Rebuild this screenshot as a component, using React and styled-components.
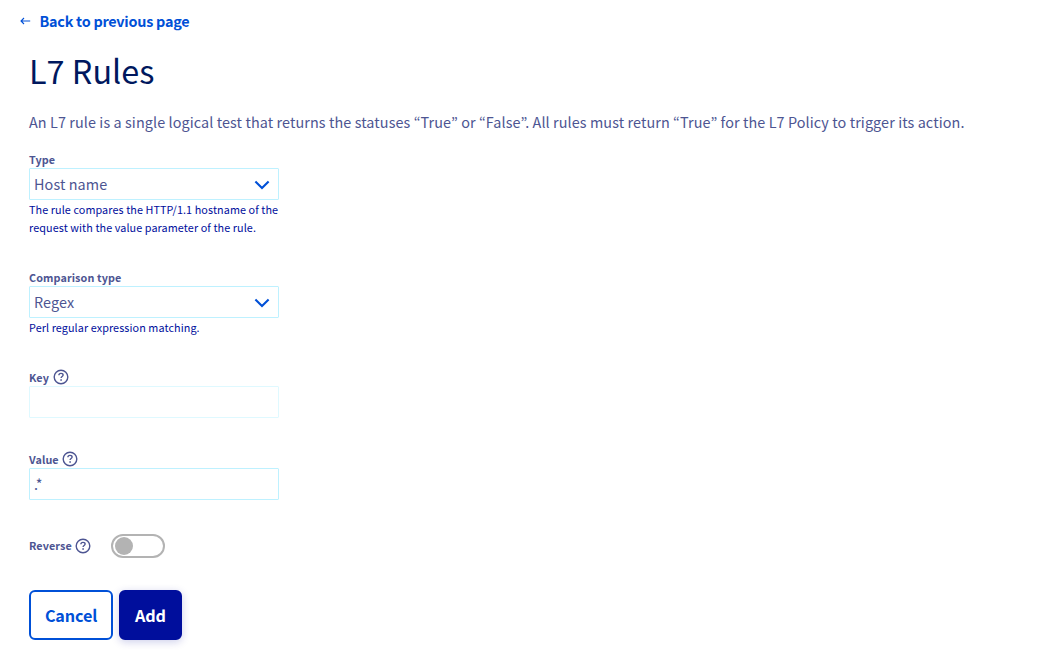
import React from "react";
import styled, { createGlobalStyle } from "styled-components";

const Global = createGlobalStyle`
  * { box-sizing: border-box; }
  body {
    margin: 0;
    background: #fff;
    color: #4d5592;
    font-family: "Source Sans Pro", "Noto Sans CJK KR", "Noto Sans", sans-serif;
    font-size: 14.4px;
    line-height: 24px;
  }
`;

const Page = styled.main`
  height: 666px;
  padding: 9px 29px 0;
  overflow: hidden;
`;

const BackLink = styled.a`
  display: flex;
  align-items: center;
  gap: 8.5px;
  height: 24px;
  margin-left: -9px;
  color: #0050d7;
  font-weight: 700;
  letter-spacing: -0.25px;
  text-decoration: none;
  svg { display: block; }
`;

const Title = styled.h1`
  margin: 15px 0 0;
  height: 44px;
  color: #00185e;
  font-size: 32.4px;
  font-weight: 400;
  line-height: 44px;
`;

const Description = styled.p`
  margin: 18px 0 0;
  height: 24px;
  letter-spacing: 0.088px;
  white-space: nowrap;
`;

const Form = styled.form`
  display: flex;
  flex-direction: column;
  width: 250px;
  padding-top: 17px;
`;

const Field = styled.div`
  height: ${(p) => p.$height}px;
`;

const LabelRow = styled.div`
  display: flex;
  align-items: center;
  gap: 3.6px;
  height: 16px;
  margin-bottom: 1px;
  svg { display: block; flex: none; }
`;

const Label = styled.label`
  font-size: 10.8px;
  font-weight: 700;
  letter-spacing: 0.1px;
  line-height: 16px;
  white-space: nowrap;
`;

const Control = styled.div`
  display: flex;
  align-items: center;
  justify-content: space-between;
  height: 32px;
  padding: 0 8px 0 4px;
  border: 1px solid #bef1ff;
  border-radius: 1px;
  letter-spacing: 0.09px;
  svg { display: block; margin-top: 1px; }
`;

const Input = styled.input`
  display: block;
  width: 250px;
  height: 32px;
  padding: 0 4px 1px;
  border: 1px solid #bef1ff;
  border-radius: 1px;
  background: #fff;
  color: #4d5592;
  font: inherit;
  outline: none;
  &:disabled { border-color: #dff9ff; }
`;

const Hint = styled.p`
  margin: 0;
  color: #000e9c;
  font-size: 10.8px;
  letter-spacing: 0.09px;
  line-height: 18px;
  white-space: nowrap;
`;

const SwitchRow = styled.div`
  display: flex;
  align-items: center;
  gap: 19.4px;
  height: 24px;
  margin-top: 1px;
  ${Label} { margin-bottom: 2px; }
`;

const Switch = styled.div`
  width: 54px;
  height: 24px;
  padding: 1px 2px;
  border: 2px solid #b3b3b3;
  border-radius: 12px;
`;

const Knob = styled.div`
  width: 18px;
  height: 18px;
  border-radius: 50%;
  background: #b3b3b3;
`;

const Actions = styled.div`
  display: flex;
  gap: 6px;
  margin-top: 32px;
`;

const Button = styled.button`
  width: ${(p) => p.$width}px;
  height: 50px;
  padding: 0;
  border: 2px solid ${(p) => (p.$primary ? "#000e9c" : "#0050d7")};
  border-radius: 6px;
  background: ${(p) => (p.$primary ? "#000e9c" : "#fff")};
  color: ${(p) => (p.$primary ? "#fff" : "#0050d7")};
  box-shadow: ${(p) => (p.$primary ? "0 2px 8px rgba(0, 14, 156, 0.2)" : "none")};
  font-family: inherit;
  font-size: 16.2px;
  font-weight: 700;
  letter-spacing: -0.15px;
  line-height: 24px;
`;

const Arrow = () => (
  <svg width="11" height="8" viewBox="0 0 11 8" fill="none" stroke="#0050d7" strokeWidth="1.1">
    <path d="M10.2 4H1M4 1L1 4l3 3" />
  </svg>
);

const Chevron = () => (
  <svg width="16" height="10" viewBox="0 0 16 10" fill="none" stroke="#0050d7" strokeWidth="2.1">
    <path d="M1.4 1.6L8 8.1l6.6-6.5" />
  </svg>
);

const Help = () => (
  <svg width="16" height="16" viewBox="0 0 16 16" fill="none" stroke="#4d5592" strokeWidth="1.4">
    <circle cx="8" cy="8" r="6.8" />
    <path d="M5.9 6.2c0-1.2.9-1.8 2.1-1.8s2.1.6 2.1 1.7c0 1.4-2 1.5-2 3" />
    <path d="M8.1 10.3v1.5" strokeWidth="1.6" />
  </svg>
);

export default function App() {
  return (
    <>
      <Global />
      <Page>
        <BackLink><Arrow />Back to previous page</BackLink>
        <Title>L7 Rules</Title>
        <Description>
          An L7 rule is a single logical test that returns the statuses “True” or “False”. All rules must return “True” for the L7 Policy to trigger its action.
        </Description>
        <Form>
          <Field $height={118}>
            <LabelRow><Label>Type</Label></LabelRow>
            <Control>Host name<Chevron /></Control>
            <Hint>The rule compares the HTTP/1.1 hostname of the<br />request with the value parameter of the rule.</Hint>
          </Field>
          <Field $height={100}>
            <LabelRow><Label>Comparison type</Label></LabelRow>
            <Control>Regex<Chevron /></Control>
            <Hint>Perl regular expression matching.</Hint>
          </Field>
          <Field $height={82}>
            <LabelRow><Label>Key</Label><Help /></LabelRow>
            <Input disabled />
          </Field>
          <Field $height={82}>
            <LabelRow><Label>Value</Label><Help /></LabelRow>
            <Input defaultValue=".*" />
          </Field>
          <SwitchRow>
            <LabelRow><Label>Reverse</Label><Help /></LabelRow>
            <Switch><Knob /></Switch>
          </SwitchRow>
          <Actions>
            <Button type="button" $width={84}>Cancel</Button>
            <Button type="button" $width={63} $primary>Add</Button>
          </Actions>
        </Form>
      </Page>
    </>
  );
}
